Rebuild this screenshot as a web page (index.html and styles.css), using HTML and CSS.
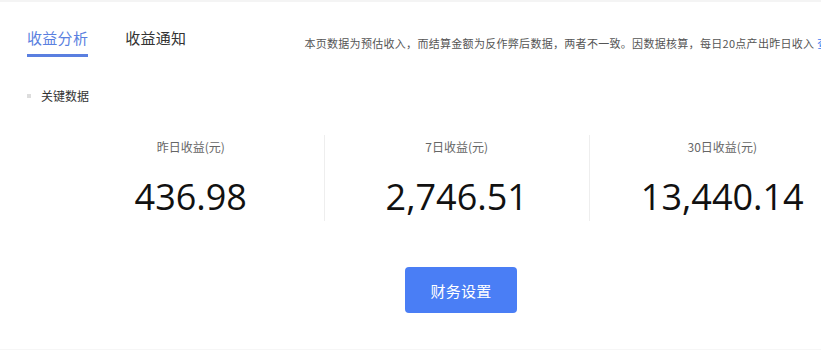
FILE: index.html
```html
<!DOCTYPE html>
<html lang="zh-CN">
<head>
<meta charset="utf-8">
<title>收益分析</title>
<link rel="stylesheet" href="styles.css">
</head>
<body>
<div class="page">
  <div class="header">
    <div class="tabs">
      <div class="tab active">收益分析</div>
      <div class="tab">收益通知</div>
    </div>
    <div class="notice">本页数据为预估收入，而结算金额为反作弊后数据，两者不一致。因数据核算，每日20点产出昨日收入 <span class="link">查看详情</span></div>
  </div>
  <div class="section-title"><span class="dot"></span>关键数据</div>
  <div class="stats">
    <div class="stat">
      <div class="label">昨日收益(元)</div>
      <div class="value">436.98</div>
    </div>
    <div class="stat">
      <div class="label">7日收益(元)</div>
      <div class="value">2,746.51</div>
    </div>
    <div class="stat">
      <div class="label">30日收益(元)</div>
      <div class="value">13,440.14</div>
    </div>
  </div>
  <div class="actions">
    <button class="btn">财务设置</button>
  </div>
</div>
</body>
</html>
```
FILE: styles.css
```css
html, body {
  margin: 0;
  padding: 0;
  background: #fff;
  overflow: hidden;
}
body {
  width: 821px;
  height: 352px;
  font-family: "Noto Sans CJK SC", "Open Sans", sans-serif;
  color: #333;
  border-top: 2px solid #f4f4f4;
  box-sizing: border-box;
}
.page {
  width: 922px;
  height: 348px;
  padding: 0 0 0 27px;
  box-sizing: border-box;
  border-bottom: 1px solid #f6f6f6;
}
.header {
  display: flex;
  align-items: flex-start;
  height: 56px;
  padding-top: 25px;
  box-sizing: border-box;
}
.tabs {
  display: flex;
  gap: 37px;
  flex: none;
}
.tab {
  font-size: 15px;
  line-height: 22px;
  color: #333;
  height: 30px;
  box-sizing: border-box;
  letter-spacing: 0.3px;
}
.tab.active {
  color: #5a7fe0;
  border-bottom: 3px solid #5a7fe0;
}
.notice {
  margin-left: 118px;
  margin-top: 8px;
  font-size: 11px;
  line-height: 16px;
  color: #555;
  white-space: nowrap;
  letter-spacing: 0.3px;
}
.link {
  color: #3a7cf0;
}
.section-title {
  display: flex;
  align-items: center;
  margin-top: 29px;
  font-size: 12px;
  line-height: 18px;
  color: #333;
}
.dot {
  width: 4px;
  height: 4px;
  background: #ddd;
  margin-right: 10px;
}
.stats {
  display: grid;
  grid-template-columns: repeat(3, 265.5px);
  margin-left: 31px;
  margin-top: 30px;
}
.stat {
  text-align: center;
  height: 86px;
  padding-top: 4px;
  box-sizing: border-box;
}
.stat + .stat {
  border-left: 1px solid #eee;
}
.label {
  font-size: 12px;
  line-height: 16px;
  color: #666;
}
.value {
  font-family: "Open Sans", sans-serif;
  font-size: 36px;
  line-height: 44px;
  margin-top: 20px;
  color: #111;
}
.actions {
  display: flex;
  margin-left: 378px;
  margin-top: 46px;
}
.btn {
  width: 112px;
  height: 46px;
  border: none;
  border-radius: 4px;
  background: #4a7ef5;
  color: #fff;
  font-family: "Noto Sans CJK SC", sans-serif;
  font-size: 15px;
  letter-spacing: 0.3px;
}
```
